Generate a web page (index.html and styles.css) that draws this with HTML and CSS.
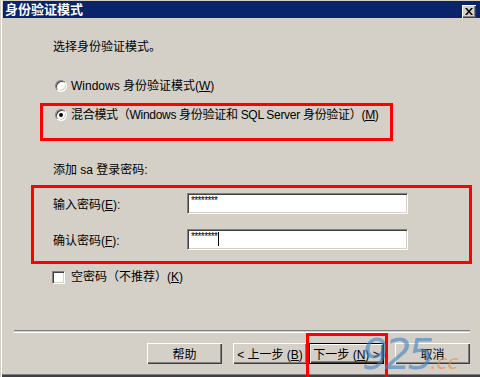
FILE: index.html
```html
<!DOCTYPE html>
<html>
<head>
    <title>身份验证模式</title>
    <link rel="stylesheet" href="styles.css">
</head>
<body>
    <div class="window">
        <!-- Title bar -->
        <div class="titlebar">
            <span class="title">身份验证模式</span>
            <button class="close-button">
                <svg width="8" height="7" viewBox="0 0 8 7"><path d="M0 0h2l2 2.5 2-2.5h2l-3 3.5 3 3.5h-2l-2-2.5-2 2.5h-2l3-3.5z" fill="#000"/></svg>
            </button>
        </div>

        <div class="content">
            <p class="label-row">选择身份验证模式。</p>

            <label class="option first-option"><span class="radio"></span>Windows 身份验证模式(<u>W</u>)</label>
            <label class="option second-option tight"><span class="radio checked"></span>混合模式（Windows 身份验证和 SQL Server 身份验证）(<u>M</u>)</label>

            <p class="label-row sa-row">添加 sa 登录密码:</p>

            <div class="field first-field">
                <span class="field-label">输入密码(<u>E</u>):</span>
                <div class="input-box">********</div>
            </div>
            <div class="field second-field">
                <span class="field-label">确认密码(<u>F</u>):</span>
                <div class="input-box">********<span class="caret"></span></div>
            </div>

            <label class="option check-option"><span class="checkbox"></span>空密码（不推荐）(<u>K</u>)</label>
        </div>

        <div class="separator"></div>

        <!-- Wizard buttons -->
        <div class="buttons">
            <button class="btn">帮助</button>
            <button class="btn back-btn">&lt; 上一步 (<u>B</u>)</button>
            <button class="btn default-btn">下一步 (<u>N</u>) &gt;</button>
            <button class="btn cancel-btn">取消</button>
        </div>

        <!-- Red annotation boxes -->
        <div class="mark mark-mode"></div>
        <div class="mark mark-password"></div>
        <div class="mark mark-next"></div>

        <!-- Site watermark -->
        <div class="watermark">925<span class="watermark-cc">.cc</span></div>
    </div>
</body>
</html>
```

FILE: styles.css
```css
/* Page reset */
body {
    margin: 0;
    background-color: #d4d0c8;
}

/* Classic dialog frame */
.window {
    position: relative;
    width: 480px;
    height: 377px;
    box-sizing: border-box;
    padding: 1px 0 0 3px;
    background-color: #d4d0c8;
    box-shadow: inset 1px 0 #d4d0c8, inset 2px 0 #fff, inset 0 -1px #404040, inset 0 -2px #404040, inset 0 -3px #808080;
    font-family: "Liberation Sans", "Noto Sans CJK SC", sans-serif;
    font-size: 12px;
    color: #000;
    overflow: hidden;
}

/* Title bar */
.titlebar {
    display: flex;
    align-items: center;
    justify-content: space-between;
    height: 17px;
    padding: 0 4px 0 2px;
    background-color: #0a246a;
}

.title {
    color: #fff;
    font-weight: bold;
    font-size: 13px;
    line-height: 17px;
}

.close-button {
    display: flex;
    align-items: center;
    justify-content: center;
    width: 14px;
    height: 13px;
    margin-top: 3px;
    padding: 0;
    background-color: #d4d0c8;
    border: none;
    box-shadow: inset 1px 1px #fff, inset -1px -1px #404040, inset -2px -2px #808080;
}

/* Main area */
.content {
    display: flex;
    flex-direction: column;
    padding-left: 50px;
}

.label-row {
    margin: 21px 0 0;
    height: 16px;
    line-height: 16px;
}

.sa-row {
    margin-top: 39px;
}

.option {
    display: flex;
    align-items: center;
    height: 16px;
    line-height: 16px;
}

.tight {
    letter-spacing: -0.3px;
}

.first-option {
    margin-top: 23px;
}

.second-option {
    margin-top: 13px;
}

.check-option {
    margin-top: 19px;
}

/* Radio buttons */
.radio {
    width: 12px;
    height: 12px;
    margin: 0 4px 0 2px;
    box-sizing: border-box;
    border-radius: 50%;
    background-color: #fff;
    border: 1px solid;
    border-color: #808080 #fff #fff #808080;
    box-shadow: inset 1px 1px #404040, inset -1px -1px #d4d0c8;
    position: relative;
}

.radio.checked::after {
    content: "";
    position: absolute;
    left: 3px;
    top: 3px;
    width: 4px;
    height: 4px;
    border-radius: 50%;
    background-color: #000;
}

/* Check box */
.checkbox {
    width: 13px;
    height: 13px;
    margin: 0 6px 0 -1px;
    box-sizing: border-box;
    background-color: #fff;
    border: 1px solid;
    border-color: #808080 #fff #fff #808080;
    box-shadow: inset 1px 1px #404040, inset -1px -1px #d4d0c8;
}

/* Password fields */
.field {
    display: flex;
    align-items: center;
    height: 21px;
}

.first-field {
    margin-top: 15px;
}

.second-field {
    margin-top: 15px;
}

.field-label {
    width: 134px;
}

.input-box {
    display: flex;
    align-items: flex-start;
    width: 221px;
    height: 21px;
    box-sizing: border-box;
    padding: 2px 3px;
    background-color: #fff;
    border: 1px solid;
    border-color: #808080 #fff #fff #808080;
    box-shadow: inset 1px 1px #404040, inset -1px -1px #d4d0c8;
    font-size: 10px;
    line-height: 10px;
    letter-spacing: -0.6px;
}

.caret {
    width: 1px;
    height: 14px;
    margin-left: 1px;
    background-color: #000;
}

/* Etched separator */
.separator {
    margin: 45px 10px 0 11px;
    height: 1px;
    border-top: 1px solid #808080;
    border-bottom: 1px solid #fff;
}

/* Buttons */
.buttons {
    display: flex;
    justify-content: flex-end;
    margin-top: 10px;
    padding-right: 10px;
}

.btn {
    width: 75px;
    height: 21px;
    margin-left: 11px;
    padding: 0;
    font-family: "Liberation Sans", "Noto Sans CJK SC", sans-serif;
    font-size: 12px;
    background-color: #d4d0c8;
    border: none;
    box-shadow: inset 1px 1px #fff, inset -1px -1px #404040, inset -2px -2px #808080;
    color: #000;
}

.back-btn {
    width: 74px;
}

.default-btn {
    margin-left: 2px;
    box-shadow: inset 0 0 0 1px #000, inset 2px 2px #fff, inset -2px -2px #404040, inset -3px -3px #808080;
}

/* Red highlight boxes */
.mark {
    position: absolute;
    border: 3px solid #f00;
    box-sizing: border-box;
}

.mark-mode {
    left: 40px;
    top: 103px;
    width: 353px;
    height: 38px;
}

.mark-password {
    left: 31px;
    top: 185px;
    width: 441px;
    height: 79px;
}

.mark-next {
    left: 306px;
    top: 333px;
    width: 82px;
    height: 50px;
}

/* Watermark overlay */
.watermark {
    position: absolute;
    left: 362px;
    top: 333px;
    font-family: "DejaVu Sans", sans-serif;
    font-size: 42px;
    font-style: italic;
    line-height: 44px;
    letter-spacing: -4px;
    color: rgba(60, 130, 195, 0.6);
    pointer-events: none;
}

.watermark-cc {
    font-size: 20px;
    letter-spacing: 0;
    color: rgba(225, 145, 75, 0.65);
}
```
